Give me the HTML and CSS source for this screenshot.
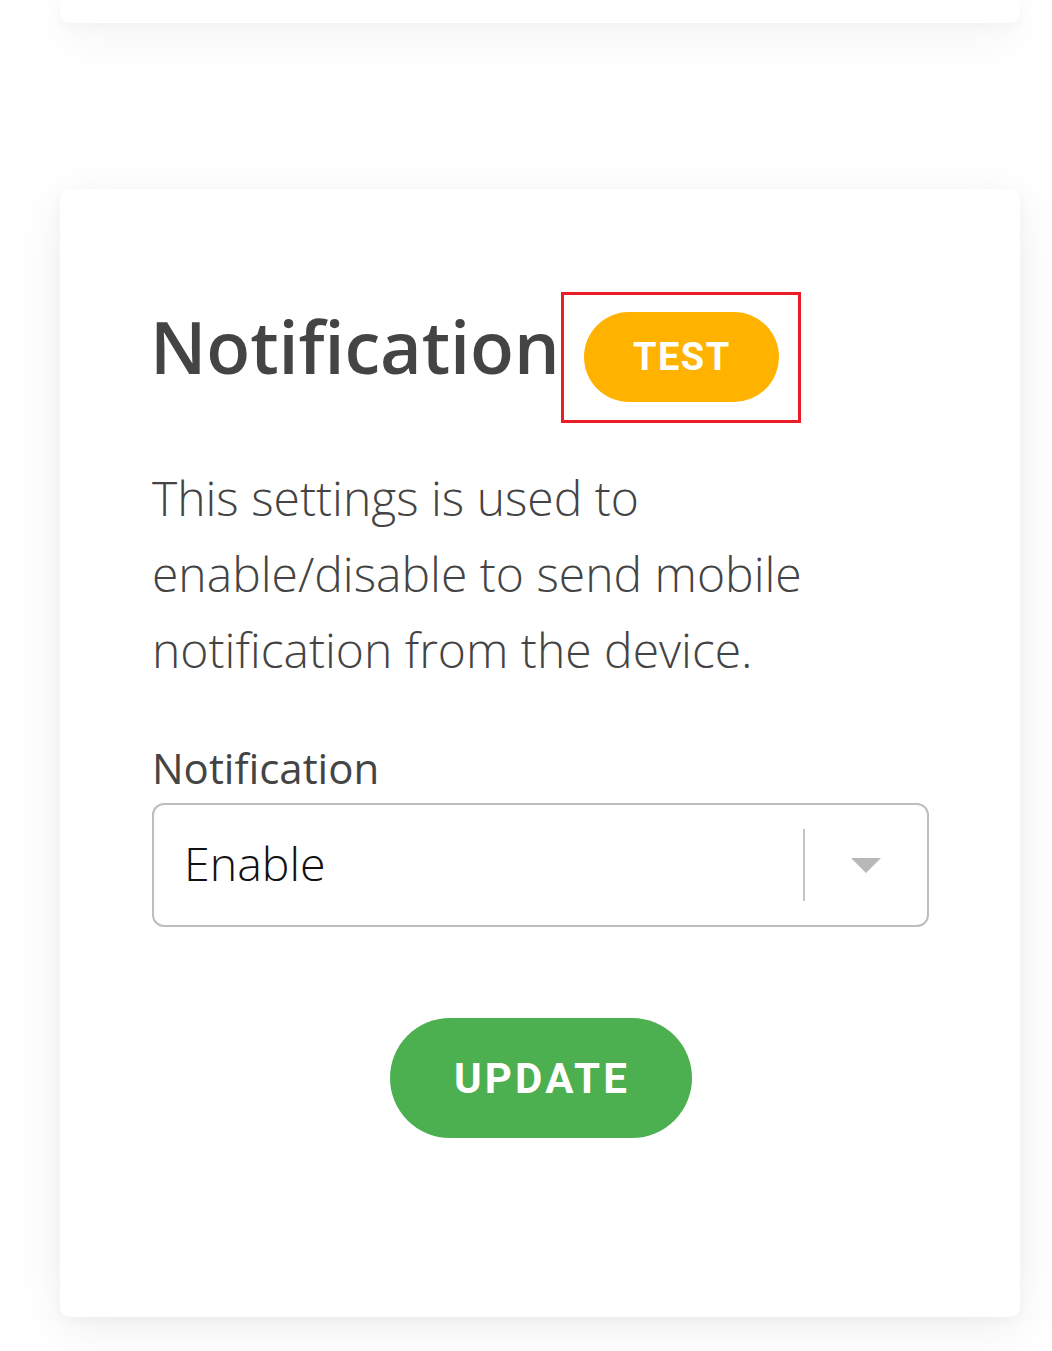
FILE: index.html
```html
<!DOCTYPE html>
<html lang="en">
<head>
<meta charset="utf-8">
<title>Notification</title>
<link rel="stylesheet" href="styles.css">
</head>
<body>
<div class="page">
  <div class="card card-top"></div>
  <section class="card card-main">
    <div class="title-row">
      <h1 class="title">Notification</h1>
      <div class="highlight">
        <span class="badge">TEST</span>
      </div>
    </div>
    <p class="desc">This settings is used to enable/disable to send mobile notification from the device.</p>
    <label class="label">Notification</label>
    <div class="select">
      <span class="select-value">Enable</span>
      <span class="select-sep"></span>
      <span class="select-arrow"></span>
    </div>
    <div class="actions">
      <button class="btn-update">UPDATE</button>
    </div>
  </section>
</div>
</body>
</html>
```
FILE: styles.css
```css
html, body {
  margin: 0;
  padding: 0;
  background: #ffffff;
}
body {
  font-family: "Open Sans", "Liberation Sans", sans-serif;
}
.page {
  padding: 0 32px 60px 60px;
  display: flex;
  flex-direction: column;
  width: 960px;
}
.card {
  background: #fff;
  border-radius: 10px;
  box-shadow: 0 10px 50px rgba(0, 0, 0, 0.07), 0 4px 12px rgba(0, 0, 0, 0.03);
}
.card-top {
  height: 23px;
  border-radius: 0 0 10px 10px;
}
.card-main {
  margin-top: 166px;
  padding: 103px 91px 179px 92px;
  height: 1128px;
  box-sizing: border-box;
}
.title-row {
  display: flex;
  align-items: center;
}
.title {
  margin: 0 1px 22px -2px;
  font-size: 72px;
  font-weight: 600;
  color: #444;
  line-height: 1.1;
  letter-spacing: -0.1px;
}
.highlight {
  border: 3px solid #ED1C24;
  box-sizing: border-box;
  width: 240px;
  height: 131px;
  padding: 17px 0 0 20px;
}
.badge {
  display: flex;
  align-items: center;
  justify-content: center;
  width: 195px;
  height: 90px;
  border-radius: 45px;
  background: #FFB300;
  color: #fff;
  font-family: Roboto, "Liberation Sans", sans-serif;
  font-weight: 700;
  font-size: 38px;
  letter-spacing: 1.5px;
  padding-left: 1.5px;
  box-sizing: border-box;
}
.desc {
  margin: 37px 0 0;
  font-size: 48px;
  font-weight: 300;
  line-height: 76px;
  color: #444;
  max-width: 700px;
}
.label {
  display: block;
  margin-top: 55px;
  font-size: 42px;
  line-height: 49px;
  color: #444;
}
.select {
  margin-top: 11px;
  height: 124px;
  box-sizing: border-box;
  border: 2px solid #bdbdbd;
  border-radius: 12px;
  display: flex;
  align-items: center;
  padding: 0 46px 0 30px;
}
.select-value {
  flex: 1;
  font-size: 46.5px;
  font-weight: 300;
  color: #111;
  line-height: 1;
  margin-top: -4px;
}
.select-sep {
  width: 2px;
  height: 72px;
  background: #c4c4c4;
  margin-right: 46px;
}
.select-arrow {
  width: 0;
  height: 0;
  border-left: 15px solid transparent;
  border-right: 15px solid transparent;
  border-top: 15px solid #b8b8b8;
}
.actions {
  display: flex;
  justify-content: center;
  margin-top: 91px;
}
.btn-update {
  width: 302px;
  height: 120px;
  border: none;
  border-radius: 60px;
  background: #4CAF50;
  color: #fff;
  font-family: Roboto, "Liberation Sans", sans-serif;
  font-weight: 700;
  font-size: 42px;
  letter-spacing: 3.2px;
  padding: 0 0 0 3px;
  cursor: pointer;
}
```
